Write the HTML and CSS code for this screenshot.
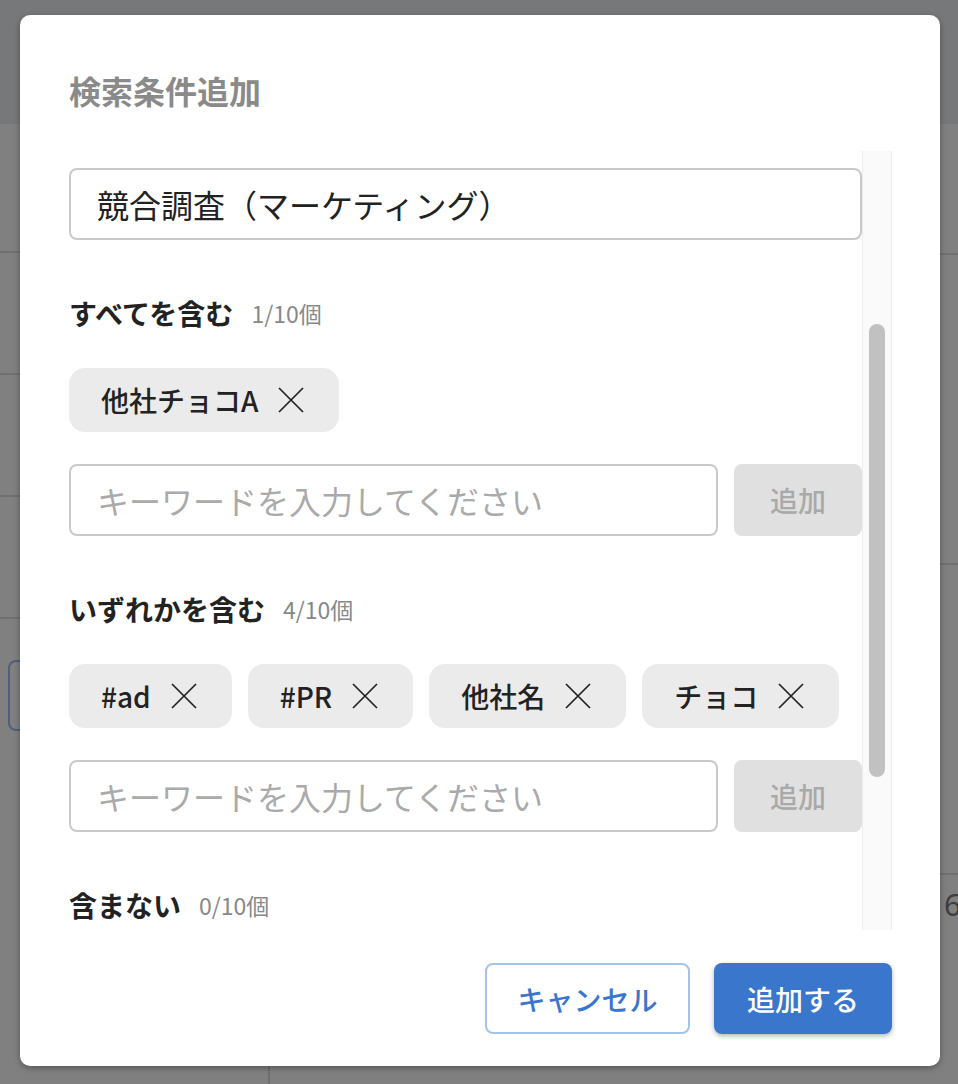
FILE: index.html
```html
<!DOCTYPE html>
<html lang="ja">
<head>
<meta charset="utf-8">
<title>検索条件追加</title>
<link rel="stylesheet" href="styles.css">
</head>
<body>
<div class="under">
  <div class="under-header"></div>
  <div class="under-left">
    <div class="lrow lrow-first"></div>
    <div class="lrow"></div>
    <div class="lrow"></div>
    <div class="lrow"></div>
    <div class="lrow lrow-box"><div class="ghost-box"></div></div>
  </div>
  <div class="under-right">
    <div class="rrow rrow-first"></div>
    <div class="rrow"></div>
    <div class="rrow"></div>
    <div class="rrow rrow-last"><span class="ghost-num">6</span></div>
  </div>
</div>

<div class="modal">
  <h2 class="modal-title">検索条件追加</h2>
  <div class="modal-body">
    <div class="scroll-content">
      <div class="name-field">競合調査（マーケティング）</div>

      <section class="section">
        <div class="label-row"><span class="label">すべてを含む</span><span class="count">1/10個</span></div>
        <div class="chips">
          <span class="chip">他社チョコA<svg class="x" viewBox="0 0 26 26"><path d="M1 1L25 25M25 1L1 25"/></svg></span>
        </div>
        <div class="add-row">
          <div class="kw-input">キーワードを入力してください</div>
          <div class="add-btn">追加</div>
        </div>
      </section>

      <section class="section">
        <div class="label-row"><span class="label">いずれかを含む</span><span class="count">4/10個</span></div>
        <div class="chips">
          <span class="chip">#ad<svg class="x" viewBox="0 0 26 26"><path d="M1 1L25 25M25 1L1 25"/></svg></span>
          <span class="chip">#PR<svg class="x" viewBox="0 0 26 26"><path d="M1 1L25 25M25 1L1 25"/></svg></span>
          <span class="chip">他社名<svg class="x" viewBox="0 0 26 26"><path d="M1 1L25 25M25 1L1 25"/></svg></span>
          <span class="chip">チョコ<svg class="x" viewBox="0 0 26 26"><path d="M1 1L25 25M25 1L1 25"/></svg></span>
        </div>
        <div class="add-row">
          <div class="kw-input">キーワードを入力してください</div>
          <div class="add-btn">追加</div>
        </div>
      </section>

      <section class="section">
        <div class="label-row"><span class="label">含まない</span><span class="count">0/10個</span></div>
      </section>
    </div>
    <div class="scrollbar"><div class="thumb"></div></div>
  </div>
  <div class="modal-footer">
    <button class="btn btn-cancel">キャンセル</button>
    <button class="btn btn-primary">追加する</button>
  </div>
</div>
</body>
</html>
```

FILE: styles.css
```css
html, body {
  margin: 0;
  padding: 0;
}
body {
  width: 958px;
  height: 1084px;
  overflow: hidden;
  background: #808080;
  font-family: "Noto Sans CJK JP", "Noto Sans", sans-serif;
  position: relative;
}

/* underlying page (dimmed) */
.under {
  display: grid;
  grid-template-columns: 270px 1fr;
  grid-template-rows: 124px 1fr;
  height: 1084px;
}
.under-header {
  grid-column: 1 / 3;
  background: #77787a;
}
.under-left {
  border-right: 2px solid #6f6f6f;
  display: flex;
  flex-direction: column;
}
.lrow {
  height: 122px;
  border-bottom: 2px solid #707070;
  box-sizing: border-box;
  flex: none;
}
.lrow-first { height: 129px; }
.lrow-box {
  padding: 41px 0 0 8px;
  border-bottom: none;
}
.ghost-box {
  width: 120px;
  height: 71px;
  box-sizing: border-box;
  border: 2px solid #4f5f7d;
  border-radius: 8px;
}
.under-right {
  display: flex;
  flex-direction: column;
}
.rrow {
  height: 310px;
  border-bottom: 2px solid #707070;
  box-sizing: border-box;
  flex: none;
}
.rrow-first { height: 131px; }
.rrow-last { border-bottom: none; flex: 1; padding: 12px 0 0 674px; }
.ghost-num {
  font-family: "Noto Sans", sans-serif;
  font-size: 30px;
  color: #3e3e3e;
  line-height: 36px;
}

/* modal */
.modal {
  position: absolute;
  left: 20px;
  top: 15px;
  width: 920px;
  height: 1051px;
  background: #fff;
  border-radius: 10px;
  box-shadow: 0 2px 6px rgba(0, 0, 0, 0.35);
  display: flex;
  flex-direction: column;
  box-sizing: border-box;
}
.modal-title {
  margin: 0;
  padding: 53px 49px 0;
  height: 44px;
  line-height: 44px;
  font-size: 32px;
  font-weight: 700;
  color: #8a8a8a;
  margin-bottom: 39px;
  box-sizing: content-box;
}
.modal-body {
  height: 779px;
  margin: 0 48px 0 49px;
  display: flex;
  flex: none;
}
.scroll-content {
  flex: 1;
  overflow: hidden;
  padding-top: 17px;
}
.scrollbar {
  width: 30px;
  flex: none;
  box-sizing: border-box;
  background: #fafafa;
  border-left: 1px solid #ececec;
  border-right: 1px solid #ececec;
  padding-top: 173px;
  display: flex;
  justify-content: center;
}
.thumb {
  width: 16px;
  height: 453px;
  border-radius: 8px;
  background: #c1c1c1;
}

.name-field {
  height: 72px;
  box-sizing: border-box;
  border: 2px solid #c9c9c9;
  border-radius: 8px;
  padding-left: 26px;
  display: flex;
  align-items: center;
  font-size: 32px;
  color: #222;
}

.section { margin-top: 53px; }
.label-row {
  height: 40px;
  display: flex;
  align-items: center;
}
.label {
  font-size: 28px;
  font-weight: 700;
  color: #222;
}
.count {
  font-size: 23px;
  color: #888;
  margin-left: 18px;
  font-weight: 400;
}
.chips {
  margin-top: 35px;
  display: flex;
  flex-wrap: wrap;
  gap: 16px;
}
.chip {
  height: 64px;
  box-sizing: border-box;
  border-radius: 16px;
  background: #ebebeb;
  padding: 0 35px 0 32px;
  display: inline-flex;
  align-items: center;
  font-size: 28px;
  font-weight: 500;
  color: #222;
}
.x {
  width: 26px;
  height: 26px;
  margin-left: 20px;
  fill: none;
  stroke: #222;
  stroke-width: 1.7;
}
.add-row {
  margin-top: 32px;
  display: flex;
  gap: 16px;
}
.kw-input {
  flex: 1;
  height: 72px;
  box-sizing: border-box;
  border: 2px solid #c9c9c9;
  border-radius: 8px;
  padding-left: 26px;
  display: flex;
  align-items: center;
  font-size: 32px;
  color: #aaa;
}
.add-btn {
  width: 128px;
  height: 72px;
  border-radius: 8px;
  background: #e0e0e0;
  color: #a9a9a9;
  font-size: 28px;
  font-weight: 500;
  display: flex;
  align-items: center;
  justify-content: center;
}

.modal-footer {
  flex: 1;
  display: flex;
  justify-content: flex-end;
  align-items: flex-start;
  gap: 24px;
  padding: 33px 48px 0 0;
}
.btn {
  height: 71px;
  border-radius: 8px;
  font-family: "Noto Sans CJK JP", "Noto Sans", sans-serif;
  font-size: 28px;
  font-weight: 500;
  box-sizing: border-box;
  cursor: pointer;
  padding: 0;
}
.btn-cancel {
  width: 205px;
  background: #fff;
  border: 2px solid #a4c2ec;
  color: #3a76cc;
}
.btn-primary {
  width: 178px;
  background: #3a76cc;
  border: none;
  color: #fff;
  box-shadow: 0 2px 5px rgba(0, 0, 0, 0.3);
}
```
